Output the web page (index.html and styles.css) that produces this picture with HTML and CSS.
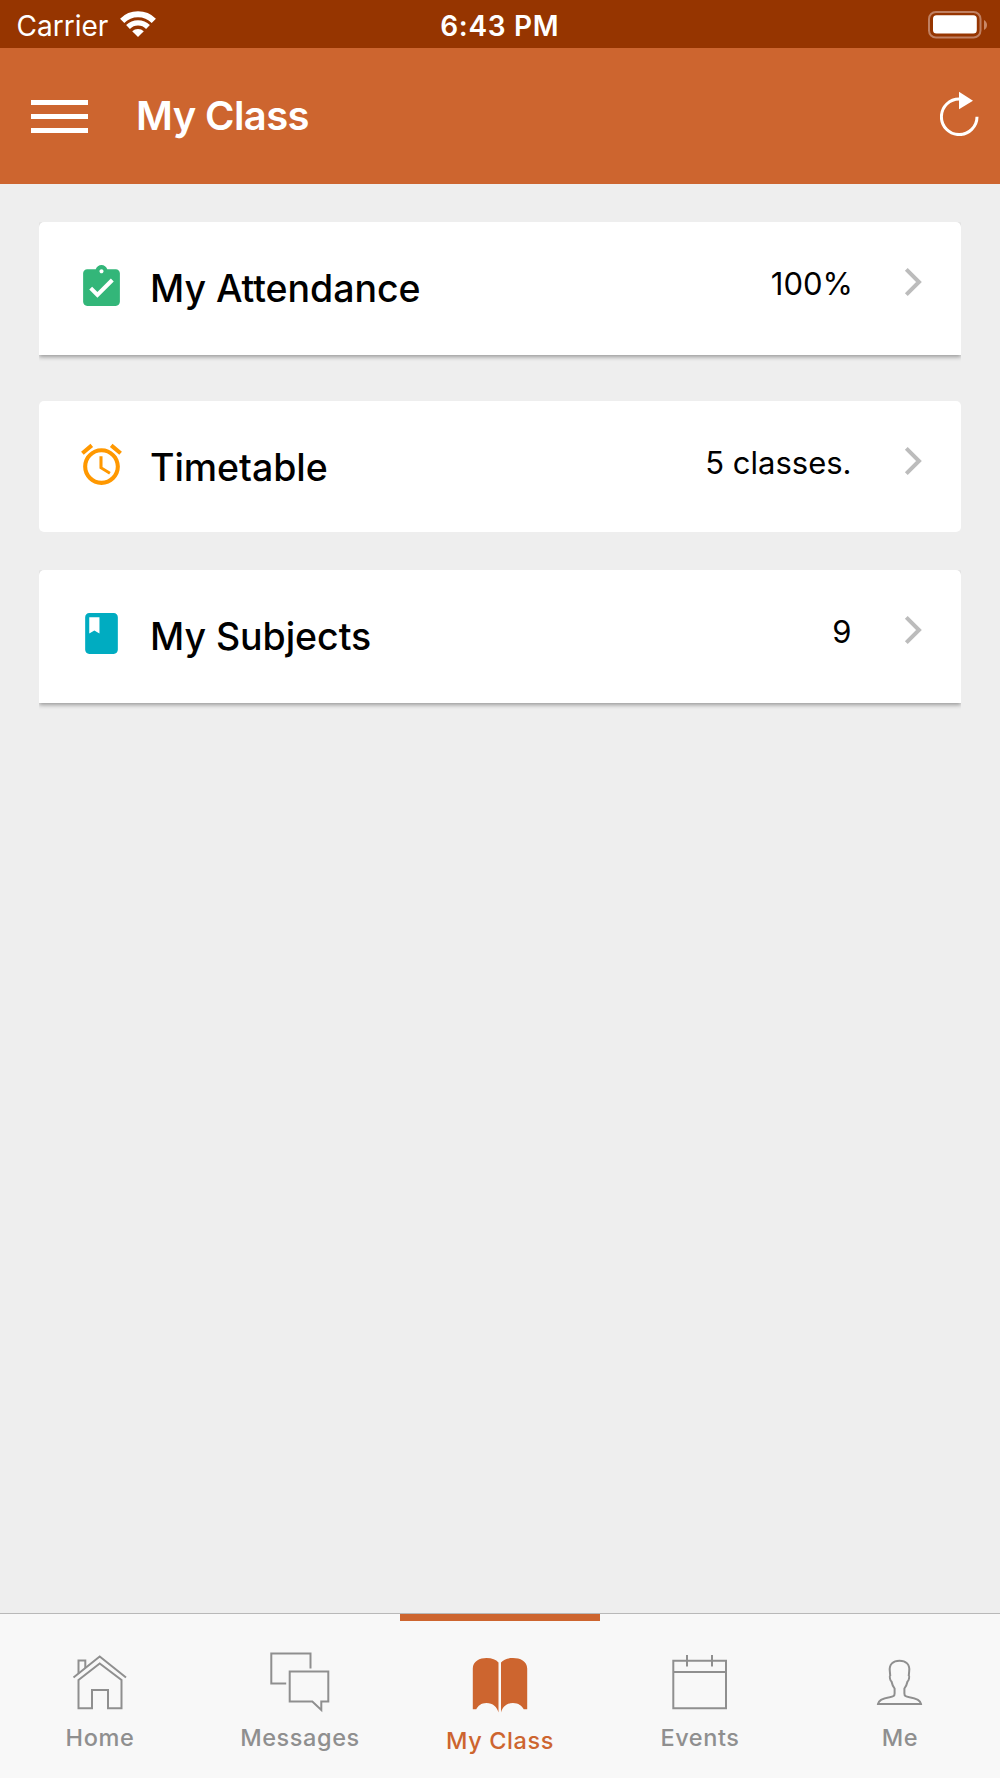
FILE: index.html
```html
<!DOCTYPE html>
<html lang="en">
<head>
    <meta charset="UTF-8">
    <title>My Class</title>
    <link rel="stylesheet" href="styles.css">
</head>
<body>
<div class="status">
    <div class="carrier">
        <span>Carrier</span>
        <svg class="wifi" width="38" height="28" viewBox="0 0 38 28">
            <path d="M3.2 10.8 A22.5 22.5 0 0 1 34.8 10.8" stroke="#fff" stroke-width="6" fill="none"/>
            <path d="M9 17 A14.2 14.2 0 0 1 29 17" stroke="#fff" stroke-width="5.4" fill="none"/>
            <path d="M13.2 21.3 A8.2 8.2 0 0 1 24.8 21.3 L19 27 Z" fill="#fff"/>
        </svg>
    </div>
    <div class="time">6:43 PM</div>
    <svg class="battery" width="60" height="28" viewBox="0 0 60 28">
        <rect x="1" y="1" width="51.5" height="25.5" rx="7" fill="none" stroke="#c08062" stroke-width="2"/>
        <rect x="5" y="4.3" width="43.8" height="18.3" rx="3.5" fill="#fff"/>
        <path d="M56 9 C60 11 60 17 56 19 Z" fill="#c98867"/>
    </svg>
</div>

<div class="header">
    <div class="menu"><i></i><i></i><i></i></div>
    <h1>My Class</h1>
    <svg class="refresh" width="40" height="46" viewBox="0 0 40 46">
        <path d="M19.5 9 A17.8 17.8 0 1 0 37 26.8" fill="none" stroke="#fff" stroke-width="3"/>
        <path d="M19 1.8 L33 10.8 L19 19.3 Z" fill="#fff"/>
    </svg>
</div>

<div class="content">
    <div class="card raised">
        <svg class="icon green" viewBox="0 0 24 24">
            <path d="M19 3h-4.18C14.4 1.84 13.3 1 12 1c-1.3 0-2.4.84-2.82 2H5c-1.1 0-2 .9-2 2v14c0 1.1.9 2 2 2h14c1.1 0 2-.9 2-2V5c0-1.1-.9-2-2-2zm-7 0c.55 0 1 .45 1 1s-.45 1-1 1-1-.45-1-1 .45-1 1-1zm-2 14l-4-4 1.41-1.41L10 14.17l6.59-6.59L18 9l-8 8z"/>
        </svg>
        <span class="name">My Attendance</span>
        <span class="value percent">100%</span>
        <svg class="arrow" width="20" height="30" viewBox="0 0 20 30"><path d="M2.3 2.3 L15 15 L2.3 27.7"/></svg>
    </div>
    <div class="card">
        <svg class="icon orange" viewBox="0 0 24 24">
            <path d="M22 5.72l-4.6-3.86-1.29 1.53 4.6 3.86L22 5.72zM7.88 3.39L6.6 1.86 2 5.71l1.29 1.53 4.59-3.85zM12.5 8H11v6l4.75 2.85.75-1.23-4-2.37V8zM12 4c-4.97 0-9 4.03-9 9s4.02 9 9 9c4.97 0 9-4.03 9-9s-4.03-9-9-9zm0 16c-3.87 0-7-3.13-7-7s3.13-7 7-7 7 3.13 7 7-3.13 7-7 7z"/>
        </svg>
        <span class="name">Timetable</span>
        <span class="value">5 classes.</span>
        <svg class="arrow" width="20" height="30" viewBox="0 0 20 30"><path d="M2.3 2.3 L15 15 L2.3 27.7"/></svg>
    </div>
    <div class="card raised">
        <svg class="icon blue" viewBox="0 0 24 24">
            <path d="M18 2H6c-1.1 0-2 .9-2 2v16c0 1.1.9 2 2 2h12c1.1 0 2-.9 2-2V4c0-1.1-.9-2-2-2zM6 4h5v8l-2.5-1.5L6 12V4z"/>
        </svg>
        <span class="name">My Subjects</span>
        <span class="value">9</span>
        <svg class="arrow" width="20" height="30" viewBox="0 0 20 30"><path d="M2.3 2.3 L15 15 L2.3 27.7"/></svg>
    </div>
</div>

<div class="tabs">
    <div class="tab">
        <svg width="64" height="64" viewBox="0 0 64 64">
            <path d="M5.5 27.5 L31.7 6.5 L58 27.5"/>
            <path d="M10.5 30 L31.7 13.5 L53.5 30 V58.3 H40 V40 H24 V58.3 H10.5 Z"/>
            <path d="M10.5 23.5 V10.5 H17.3 V18"/>
        </svg>
        <span>Home</span>
    </div>
    <div class="tab">
        <svg width="64" height="64" viewBox="0 0 64 64">
            <path d="M42.5 18.5 V3.5 H3.3 V33.5 H18.2"/>
            <path d="M21.7 21.5 H60.3 V51.5 H53.3 V60 L44.3 51.5 H21.7 Z"/>
        </svg>
        <span>Messages</span>
    </div>
    <div class="tab on">
        <svg width="64" height="64" viewBox="0 0 64 64">
            <path d="M4.8 18.5 C4.8 11 12 8 18.5 8 C24 8 28 9.5 30.5 12.5 V62.5 C29 57 25 53 18.5 53 C13 53 10 56 8.3 59.3 H4.8 Z"/>
            <path d="M59.2 18.5 C59.2 11 52 8 45 8 C39.5 8 35.5 9.5 33 12.5 V62.5 C34.5 57 38.5 53 45 53 C50.5 53 54 56 55.7 59.3 H59.2 Z"/>
        </svg>
        <span>My Class</span>
    </div>
    <div class="tab">
        <svg width="64" height="64" viewBox="0 0 64 64">
            <path d="M5.3 10.8 H58 V58.2 H5.3 Z M5.3 22 H58 M19 5 V16.5 M44 5 V16.5"/>
        </svg>
        <span>Events</span>
    </div>
    <div class="tab">
        <svg width="64" height="64" viewBox="0 0 64 64">
            <path d="M31.5 10.7 C25 10.7 21 14.5 21.8 21 L22.2 25.5 C21.3 26 22 30.5 23.5 31.5 C24.2 35 25.5 37 26.6 38.5 V43.5 C26.6 46 25.5 46.5 21.5 47.3 C15.5 48.3 10.5 50.5 10 54 H53 C52.5 50.5 47.5 48.3 41.5 47.3 C37.5 46.5 36.4 46 36.4 43.5 V38.5 C37.5 37 38.8 35 39.5 31.5 C41 30.5 41.7 26 40.8 25.5 L41.2 21 C42 14.5 38 10.7 31.5 10.7 Z"/>
        </svg>
        <span>Me</span>
    </div>
</div>
</body>
</html>
```
FILE: styles.css
```css
* {
    margin: 0;
    padding: 0;
    box-sizing: border-box;
}

body {
    display: flex;
    flex-direction: column;
    width: 1000px;
    height: 1778px;
    background: #eee;
    color: #000;
    font-family: Inter, "Liberation Sans", sans-serif;
    overflow: hidden;
}

svg {
    display: block;
    flex: none;
}

.status {
    display: grid;
    grid-template-columns: 1fr auto 1fr;
    height: 48px;
    padding: 0 12px 0 16.5px;
    background: #963500;
    color: #fff;
    font-size: 28px;
    line-height: 52px;
}

.carrier {
    display: flex;
}

.wifi {
    margin: 10px 0 0 11px;
}

.time {
    margin-left: -5px;
    font-weight: 600;
    letter-spacing: 0.7px;
}

.battery {
    justify-self: end;
    margin-top: 11px;
}

/*标题栏*/
.header {
    display: flex;
    height: 136px;
    padding: 0 20px 0 31px;
    background: #cd652f;
    color: #fff;
}

.menu {
    width: 57px;
    padding-top: 52px;
}

.menu i {
    display: block;
    height: 5px;
    margin-bottom: 9px;
    background: #fff;
}

.header h1 {
    flex: 1;
    margin-left: 48px;
    font-size: 40px;
    font-weight: 600;
    letter-spacing: -0.6px;
    line-height: 136px;
}

.refresh {
    margin-top: 42px;
}

.content {
    flex: 1;
    padding: 38px 39px 0;
}

.card {
    display: flex;
    height: 131px;
    margin-bottom: 38px;
    padding: 0 37px 0 38px;
    border-radius: 5px;
    background: #fff;
}

.card.raised {
    height: 133px;
    margin-bottom: 46px;
    border-radius: 5px 5px 0 0;
    box-shadow: 0 2px 4px 0 #999;
    clip-path: inset(0 0 -8px 0);
}

.icon {
    width: 49px;
    height: 49px;
    margin-top: 38.5px;
}

.green {
    margin-top: 40.5px;
    fill: #33b679;
}

.orange {
    fill: #ff9800;
}

.blue {
    fill: #00acc1;
}

.name {
    flex: 1;
    margin-left: 24px;
    font-size: 37.5px;
    font-weight: 500;
    letter-spacing: -0.05px;
    line-height: 134px;
}

.value {
    font-size: 31px;
    line-height: 124px;
}

.percent {
    margin-right: -3px;
}

.arrow {
    margin: 45px 0 0 52.5px;
}

.percent + .arrow {
    margin-left: 54px;
}

.arrow path {
    fill: none;
    stroke: #bcbcbc;
    stroke-width: 4;
}

/*底部导航*/
.tabs {
    display: flex;
    height: 165px;
    border-top: 1px solid #b8b8b8;
    background: #f8f8f8;
}

.tab {
    display: flex;
    flex: 1;
    flex-direction: column;
    align-items: center;
    padding-top: 36px;
    color: #8f8f8f;
    font-size: 23.5px;
    font-weight: 500;
    letter-spacing: 0.6px;
    line-height: 30px;
}

.tab svg {
    fill: none;
    stroke: #8f8f8f;
    stroke-width: 2;
}

.tab span {
    margin-top: 9px;
}

.tab.on {
    padding-top: 29px;
    border-top: 7px solid #cd652f;
    color: #cd652f;
}

.tab.on svg {
    fill: #cd652f;
    stroke: none;
}

.tab.on span {
    margin-top: 12px;
}
```
